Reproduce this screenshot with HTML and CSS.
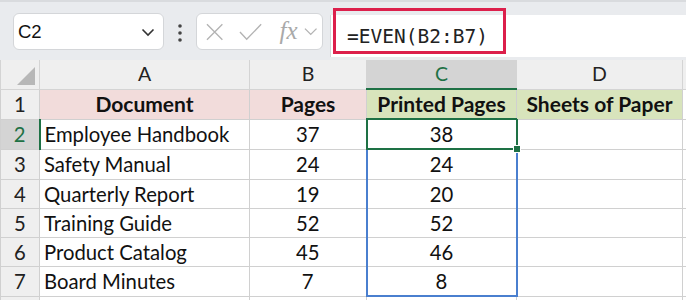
FILE: index.html
```html
<!DOCTYPE html>
<html lang="en">
<head>
    <meta charset="UTF-8">
    <title>EVEN</title>
    <link rel="stylesheet" href="styles.css">
</head>
<body>
    <div class="toolbar">
        <div class="namebox">
            <span>C2</span>
            <svg width="14" height="10" viewBox="0 0 14 10"><path d="M1.5 2.5 L7 8 L12.5 2.5" fill="none" stroke="#333" stroke-width="1.6"/></svg>
        </div>
        <svg class="dots" width="6" height="20" viewBox="0 0 6 20"><circle cx="3" cy="3" r="1.8" fill="#444"/><circle cx="3" cy="10" r="1.8" fill="#444"/><circle cx="3" cy="17" r="1.8" fill="#444"/></svg>
        <div class="fxbox">
            <svg width="18" height="18" viewBox="0 0 18 18"><path d="M1 1 L17 17 M17 1 L1 17" stroke="#b3b3b3" stroke-width="1.4"/></svg>
            <svg width="24" height="18" viewBox="0 0 24 18"><path d="M1 9 L8 16.5 L23 1" fill="none" stroke="#b3b3b3" stroke-width="1.4"/></svg>
            <span class="fx">fx</span>
            <svg width="14" height="9" viewBox="0 0 14 9"><path d="M1 1.5 L7 7.5 L13 1.5" fill="none" stroke="#b3b3b3" stroke-width="1.4"/></svg>
        </div>
        <div class="formula">
            <span class="text">=EVEN(B2:B7)</span>
            <span class="mark"></span>
        </div>
    </div>

    <table class="sheet">
        <colgroup>
            <col class="c-hd"><col class="c-a"><col class="c-b"><col class="c-c"><col class="c-d"><col class="c-e">
        </colgroup>
        <tr class="colhead">
            <th class="corner"><span class="tri"></span></th>
            <th>A</th><th>B</th><th class="sel">C</th><th>D</th><th></th>
        </tr>
        <tr>
            <th class="rh">1</th>
            <td class="h pink">Document</td>
            <td class="h pink">Pages</td>
            <td class="h green">Printed Pages</td>
            <td class="h green">Sheets of Paper</td>
            <td></td>
        </tr>
        <tr>
            <th class="rh sel">2</th>
            <td>Employee Handbook</td><td class="num">37</td><td class="num active">38<span class="handle"></span></td><td></td><td></td>
        </tr>
        <tr>
            <th class="rh">3</th>
            <td>Safety Manual</td><td class="num">24</td><td class="num rng">24</td><td></td><td></td>
        </tr>
        <tr>
            <th class="rh">4</th>
            <td>Quarterly Report</td><td class="num">19</td><td class="num rng">20</td><td></td><td></td>
        </tr>
        <tr>
            <th class="rh">5</th>
            <td>Training Guide</td><td class="num">52</td><td class="num rng">52</td><td></td><td></td>
        </tr>
        <tr>
            <th class="rh">6</th>
            <td>Product Catalog</td><td class="num">45</td><td class="num rng">46</td><td></td><td></td>
        </tr>
        <tr>
            <th class="rh">7</th>
            <td>Board Minutes</td><td class="num">7</td><td class="num rng last">8</td><td></td><td></td>
        </tr>
        <tr class="tail">
            <th class="rh"></th>
            <td></td><td></td><td></td><td></td><td></td>
        </tr>
    </table>
</body>
</html>
```

FILE: styles.css
```css
body {
    margin: 0;
    width: 686px;
    height: 300px;
    overflow: hidden;
    background: #fff;
    font-family: Lato, "Liberation Sans", sans-serif;
}
.toolbar {
    height: 60px;
    box-sizing: border-box;
    background: #e9ebee;
    border-top: 2px solid #d9dbde;
    display: flex;
    align-items: flex-start;
    padding-top: 11px;
}
.namebox {
    margin-left: 13px;
    width: 151px;
    height: 37px;
    box-sizing: border-box;
    background: #fff;
    border: 1px solid #d4d6d9;
    border-radius: 6px;
    display: flex;
    align-items: center;
    justify-content: space-between;
    padding: 0 8px 0 4px;
    font-family: "Liberation Sans", sans-serif;
    font-size: 18.5px;
    color: #111;
}
.dots {
    margin: 10px 0 0 13px;
}
.fxbox {
    margin-left: 13px;
    width: 127px;
    height: 37px;
    box-sizing: border-box;
    background: #fff;
    border: 1px solid #d4d6d9;
    border-radius: 6px;
    display: flex;
    align-items: center;
    padding: 0 5px 0 9px;
}
.fxbox svg:nth-child(2) {
    margin-left: 16px;
}
.fx {
    margin-left: 17px;
    font-family: "Liberation Serif", serif;
    font-style: italic;
    font-size: 25px;
    color: #a9a9a9;
    line-height: 1;
    margin-top: -3px;
}
.fxbox svg:last-child {
    margin-left: 6px;
}
.formula {
    position: relative;
    margin-left: 7px;
    flex: 1;
    height: 42px;
    margin-top: 2px;
    background: #fff;
    border-left: 1px solid #d4d6d9;
    display: flex;
    align-items: center;
}
.formula .text {
    margin-left: 16px;
    font-family: "DejaVu Sans Mono", monospace;
    font-size: 19.5px;
    color: #222;
}
.formula .mark {
    position: absolute;
    left: 2px;
    top: -7px;
    width: 173px;
    height: 46px;
    box-sizing: border-box;
    border: 3px solid #dc1f4b;
}
.sheet {
    border-collapse: collapse;
    table-layout: fixed;
    width: 702px;
    font-size: 20.3px;
    line-height: 22px;
    color: #111;
}
.c-hd { width: 39px; }
.c-a { width: 210px; }
.c-b { width: 117px; }
.c-c { width: 150px; }
.c-d { width: 166px; }
.c-e { width: 20px; }
.sheet th, .sheet td {
    border: 1px solid #d0d0d0;
    height: 28.2px;
    padding: 0;
    white-space: nowrap;
}
.sheet td {
    padding-left: 4px;
    position: relative;
}
.colhead th {
    height: 28px;
    background: #efefef;
    font-weight: normal;
    font-size: 19.5px;
    color: #222;
    border-color: #d4d4d4;
    border-top: 0;
}
.colhead th.sel {
    background: #d4d4d4;
    color: #1e7145;
    border-bottom: 2px solid #1e7145;
}
.corner {
    position: relative;
}
.tri {
    position: absolute;
    right: 4px;
    bottom: 4px;
    width: 0;
    height: 0;
    border-left: 18px solid transparent;
    border-bottom: 18px solid #b7b7b7;
}
.rh {
    background: #efefef;
    font-weight: normal;
    color: #222;
    text-align: center;
}
.rh.sel {
    background: #d4d4d4;
    color: #1e7145;
    border-right: 2px solid #1e7145;
}
.h {
    font-weight: bold;
    font-size: 21px;
    text-align: center;
    padding-left: 0 !important;
}
.pink { background: #f2dcdb; }
.green { background: #d8e4bc; }
.num {
    text-align: center;
    padding-left: 0 !important;
}
.active {
    border: 2px solid #1e7145 !important;
}
.handle {
    position: absolute;
    right: -5px;
    bottom: -5px;
    width: 6px;
    height: 6px;
    background: #1e7145;
    border: 1px solid #fff;
    z-index: 2;
}
.rng {
    border-left: 2px solid #4a7fcf !important;
    border-right: 2px solid #4a7fcf !important;
}
.rng.last {
    border-bottom: 2px solid #4a7fcf !important;
}
.tail th, .tail td {
    height: 10px;
}
```
